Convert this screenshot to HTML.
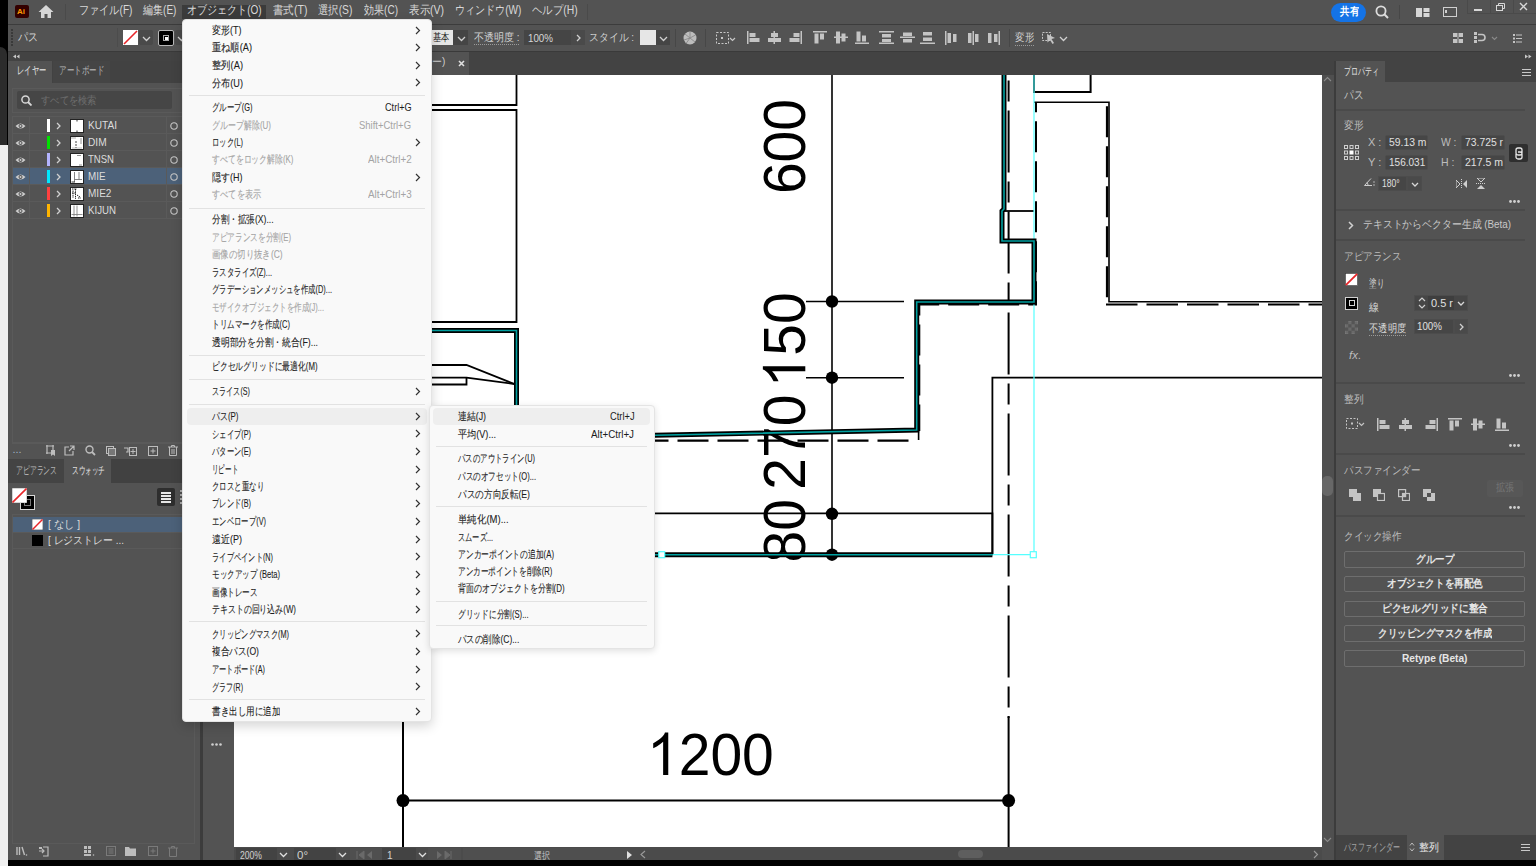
<!DOCTYPE html>
<html><head><meta charset="utf-8"><style>
*{margin:0;padding:0;box-sizing:border-box}
html,body{width:1536px;height:866px;overflow:hidden;background:#000;font-family:"Liberation Sans",sans-serif;}
.a{position:absolute}
.t{position:absolute;white-space:nowrap;line-height:1;transform-origin:0 50%}
</style></head><body>
<div class="a" style="left:0;top:0;width:8px;height:866px;background:#000"></div>
<div class="a" style="left:0;top:47px;width:7px;height:98px;background:#2c2c2c;border-radius:0 7px 0 0"></div>
<div class="a" style="left:0;top:144.5px;width:7.5px;height:722px;background:#f0f0f0"></div>
<div class="a" style="left:7.5px;top:144.5px;width:0.5px;height:722px;background:#aaa"></div>
<div class="a" style="left:8px;top:0;width:1528px;height:24px;background:#535353"></div>
<div class="a" style="left:8px;top:24px;width:1528px;height:1px;background:#3c3c3c"></div>
<div class="a" style="left:15px;top:5px;width:14px;height:13px;background:#330000;border-radius:2px"></div>
<div class="t" style="left:17px;top:7.5px;font-size:8px;font-weight:bold;color:#ff9a00;line-height:1">Ai</div>
<svg class="a" style="left:38px;top:4px" width="16" height="15" viewBox="0 0 16 15"><path d="M8 1 L0.5 8 H3 V14 H6.5 V10 H9.5 V14 H13 V8 H15.5 Z" fill="#d6d6d6"/></svg>
<div class="a" style="left:65px;top:4px;width:1px;height:16px;background:#4a4a4a"></div>
<div class="a" style="left:182px;top:5px;width:84px;height:14px;background:#3b3b3b"></div>
<div class="t" id="t0" style="left:78.5px;top:4.4px;font-size:12px;color:#d8d8d8;font-weight:normal;transform:scaleX(0.845);--w:53.5">ファイル(F)</div>
<div class="t" id="t1" style="left:142.6px;top:4.4px;font-size:12px;color:#d8d8d8;font-weight:normal;transform:scaleX(0.835);--w:33.4">編集(E)</div>
<div class="t" id="t2" style="left:187.4px;top:4.4px;font-size:12px;color:#d8d8d8;font-weight:normal;transform:scaleX(0.835);--w:74.6">オブジェクト(O)</div>
<div class="t" id="t3" style="left:272.6px;top:4.4px;font-size:12px;color:#d8d8d8;font-weight:normal;transform:scaleX(0.875);--w:34.4">書式(T)</div>
<div class="t" id="t4" style="left:318px;top:4.4px;font-size:12px;color:#d8d8d8;font-weight:normal;transform:scaleX(0.860);--w:34.4">選択(S)</div>
<div class="t" id="t5" style="left:364px;top:4.4px;font-size:12px;color:#d8d8d8;font-weight:normal;transform:scaleX(0.836);--w:34">効果(C)</div>
<div class="t" id="t6" style="left:408.6px;top:4.4px;font-size:12px;color:#d8d8d8;font-weight:normal;transform:scaleX(0.875);--w:35">表示(V)</div>
<div class="t" id="t7" style="left:455px;top:4.4px;font-size:12px;color:#d8d8d8;font-weight:normal;transform:scaleX(0.837);--w:66.4">ウィンドウ(W)</div>
<div class="t" id="t8" style="left:532.3px;top:4.4px;font-size:12px;color:#d8d8d8;font-weight:normal;transform:scaleX(0.868);--w:45.7">ヘルプ(H)</div>
<div class="a" style="left:587px;top:4px;width:1px;height:16px;background:#4a4a4a"></div>
<div class="a" style="left:1331px;top:3px;width:35px;height:19px;background:#1473e6;border-radius:10px"></div>
<div class="t" id="t9" style="left:1339.5px;top:6.4px;font-size:11px;color:#fff;font-weight:bold;transform:scaleX(0.864);--w:19">共有</div>
<svg class="a" style="left:1375px;top:5px" width="14" height="14" viewBox="0 0 14 14"><circle cx="6" cy="6" r="4.6" fill="none" stroke="#dcdcdc" stroke-width="1.8"/><path d="M9.3 9.3 L13 13" stroke="#dcdcdc" stroke-width="2"/></svg>
<div class="a" style="left:1399px;top:5px;width:1px;height:14px;background:#474747"></div>
<svg class="a" style="left:1416px;top:8px" width="14" height="10" viewBox="0 0 14 10"><rect x="0" y="0" width="6" height="9" fill="#d6d6d6"/><rect x="7.5" y="0" width="6" height="4" fill="#d6d6d6"/><rect x="7.5" y="5" width="6" height="4" fill="#d6d6d6"/></svg>
<svg class="a" style="left:1443px;top:7px" width="15" height="11" viewBox="0 0 15 11"><rect x="0.5" y="0.5" width="13" height="9" fill="none" stroke="#d0d0d0"/><rect x="2" y="3" width="2" height="3" fill="#d0d0d0"/></svg>
<div class="a" style="left:1467px;top:0;width:69px;height:14px;border:1px solid #4a4a4a;border-top:0;border-right:0"></div>
<div class="a" style="left:1490px;top:0;width:1px;height:14px;background:#4a4a4a"></div>
<div class="a" style="left:1513px;top:0;width:1px;height:14px;background:#4a4a4a"></div>
<div class="a" style="left:1474px;top:9px;width:8px;height:1.5px;background:#d8d8d8"></div>
<svg class="a" style="left:1496px;top:3px" width="9" height="8" viewBox="0 0 9 8"><rect x="0.5" y="2.5" width="6" height="5" fill="none" stroke="#d8d8d8"/><path d="M2.5 2.5 V0.5 H8.5 V5.5 H6.5" fill="none" stroke="#d8d8d8"/></svg>
<svg class="a" style="left:1519px;top:2px" width="9" height="9" viewBox="0 0 9 9"><path d="M1 1 L8 8 M8 1 L1 8" stroke="#d8d8d8" stroke-width="1.4"/></svg>
<div class="a" style="left:8px;top:25px;width:1528px;height:26px;background:#535353"></div>
<div class="a" style="left:11px;top:29px;width:2px;height:17px;background:repeating-linear-gradient(#3a3a3a 0 2px, transparent 2px 3px)"></div>
<div class="t" id="t10" style="left:18.2px;top:31.4px;font-size:12px;color:#d4d4d4;font-weight:normal;transform:scaleX(0.833);--w:20">パス</div>
<svg class="a" style="left:123px;top:30px" width="15" height="15" viewBox="0 0 15 15"><rect x="0" y="0" width="15" height="15" fill="#fff"/><path d="M1 14 L14 1" stroke="#e8262a" stroke-width="1.6"/></svg>
<svg class="a" style="left:142px;top:36px" width="9" height="6" viewBox="0 0 9 6"><path d="M1 1 L4.5 4.5 L8 1" fill="none" stroke="#d0d0d0" stroke-width="1.3"/></svg>
<div class="a" style="left:117px;top:28px;width:1px;height:19px;background:#4c4c4c"></div>
<div class="a" style="left:139px;top:29.5px;width:14px;height:15.5px;background:#4a4a4a;border-radius:2px"></div>
<div class="a" style="left:175px;top:29.5px;width:10px;height:15.5px;background:#4a4a4a;border-radius:2px"></div>
<div class="a" style="left:158px;top:30px;width:16px;height:15.5px;background:#000;border:1px solid #b8b8b8;border-radius:2px"></div>
<div class="a" style="left:163px;top:35px;width:6px;height:6px;border:1px solid #aaa"></div>
<div class="a" style="left:164.5px;top:36.5px;width:3px;height:3px;background:#fff"></div>
<svg class="a" style="left:142px;top:36px" width="9" height="6" viewBox="0 0 9 6"><path d="M1 1 L4.5 4.5 L8 1" fill="none" stroke="#d0d0d0" stroke-width="1.3"/></svg>
<svg class="a" style="left:177px;top:36px" width="9" height="6" viewBox="0 0 9 6"><path d="M1 1 L4.5 4.5 L8 1" fill="none" stroke="#d0d0d0" stroke-width="1.3"/></svg>
<div class="a" style="left:432px;top:30px;width:21px;height:15px;background:#e6e6e6"></div>
<div class="t" id="t11" style="left:433.4px;top:31.9px;font-size:11px;color:#222;font-weight:normal;transform:scaleX(0.745);--w:16.4">基本</div>
<div class="a" style="left:453px;top:30px;width:15px;height:15px;background:#454545"></div>
<svg class="a" style="left:457px;top:36px" width="9" height="6" viewBox="0 0 9 6"><path d="M1 1 L4.5 4.5 L8 1" fill="none" stroke="#d0d0d0" stroke-width="1.3"/></svg>
<div class="t" id="t12" style="left:473.7px;top:31.9px;font-size:11px;color:#d0d0d0;font-weight:normal;transform:scaleX(0.910);--w:45.6">不透明度 :</div>
<div class="a" style="left:474px;top:44px;width:45px;height:1px;border-bottom:1px dotted #9a9a9a"></div>
<div class="a" style="left:524px;top:30px;width:47px;height:15px;background:#454545"></div>
<div class="t" id="t13" style="left:527.6px;top:32.5px;font-size:11px;color:#d8d8d8;font-weight:normal;transform:scaleX(0.888);--w:25">100%</div>
<div class="a" style="left:571px;top:30px;width:14px;height:15px;background:#4a4a4a"></div>
<svg class="a" style="left:576px;top:34px" width="6" height="8" viewBox="0 0 6 8"><path d="M1 1 L4 4 L1 7" fill="none" stroke="#d0d0d0" stroke-width="1.3"/></svg>
<div class="t" id="t14" style="left:589px;top:31.9px;font-size:11px;color:#d0d0d0;font-weight:normal;transform:scaleX(0.898);--w:45">スタイル :</div>
<div class="a" style="left:640px;top:30px;width:16px;height:15px;background:#e6e6e6"></div>
<div class="a" style="left:656px;top:30px;width:14px;height:15px;background:#454545"></div>
<svg class="a" style="left:659px;top:36px" width="9" height="6" viewBox="0 0 9 6"><path d="M1 1 L4.5 4.5 L8 1" fill="none" stroke="#d0d0d0" stroke-width="1.3"/></svg>
<div class="a" style="left:675px;top:29px;width:1px;height:18px;background:#474747"></div>
<svg class="a" style="left:683px;top:31px" width="14" height="14" viewBox="0 0 14 14"><circle cx="7" cy="7" r="6.5" fill="#bdbdbd"/><path d="M7 7 L7 0.5 M7 7 L12.5 4 M7 7 L12 11 M7 7 L3 12.5 M7 7 L1 9 M7 7 L2 3" stroke="#8a8a8a" stroke-width="0.9"/></svg>
<div class="a" style="left:705px;top:29px;width:1px;height:18px;background:#474747"></div>
<svg class="a" style="left:716px;top:32px" width="20" height="13" viewBox="0 0 20 13"><rect x="0.5" y="0.5" width="12" height="11" fill="none" stroke="#c8c8c8" stroke-dasharray="2 1.5"/><rect x="5" y="5" width="2" height="2" fill="#c8c8c8"/><path d="M14 6 L16.5 8.5 L19 6" fill="none" stroke="#c8c8c8" stroke-width="1.2"/></svg>
<svg class="a" style="left:747px;top:31px" width="13" height="13" viewBox="0 0 13 13"><rect x="0" y="0" width="1.5" height="13" fill="#c4c4c4"/><rect x="2.5" y="2" width="6" height="4" fill="#c4c4c4"/><rect x="2.5" y="7" width="10" height="4" fill="#c4c4c4"/></svg>
<svg class="a" style="left:768px;top:31px" width="13" height="13" viewBox="0 0 13 13"><rect x="5.5" y="0" width="1.5" height="13" fill="#c4c4c4"/><rect x="3" y="2" width="7" height="4" fill="#c4c4c4"/><rect x="0" y="7" width="13" height="4" fill="#c4c4c4"/></svg>
<svg class="a" style="left:789px;top:31px" width="13" height="13" viewBox="0 0 13 13"><rect x="11.5" y="0" width="1.5" height="13" fill="#c4c4c4"/><rect x="4.5" y="2" width="6" height="4" fill="#c4c4c4"/><rect x="0.5" y="7" width="10" height="4" fill="#c4c4c4"/></svg>
<svg class="a" style="left:813px;top:31px" width="14" height="13" viewBox="0 0 14 13"><rect x="0" y="0" width="14" height="1.5" fill="#c4c4c4"/><rect x="1.5" y="2.5" width="4" height="10" fill="#c4c4c4"/><rect x="7" y="2.5" width="4" height="6" fill="#c4c4c4"/></svg>
<svg class="a" style="left:834px;top:31px" width="14" height="13" viewBox="0 0 14 13"><rect x="0" y="5.5" width="14" height="1.5" fill="#c4c4c4"/><rect x="2" y="0.5" width="4" height="12" fill="#c4c4c4"/><rect x="7.5" y="2.5" width="4" height="8" fill="#c4c4c4"/></svg>
<svg class="a" style="left:855px;top:31px" width="14" height="13" viewBox="0 0 14 13"><rect x="0" y="11.5" width="14" height="1.5" fill="#c4c4c4"/><rect x="1.5" y="0.5" width="4" height="10" fill="#c4c4c4"/><rect x="7" y="4.5" width="4" height="6" fill="#c4c4c4"/></svg>
<svg class="a" style="left:879px;top:31px" width="15" height="13" viewBox="0 0 15 13"><rect x="0" y="0" width="15" height="1.5" fill="#c4c4c4"/><rect x="3" y="3" width="9" height="3.5" fill="#c4c4c4"/><rect x="0" y="11.5" width="15" height="1.5" fill="#c4c4c4"/><rect x="3" y="8" width="9" height="3" fill="#c4c4c4"/></svg>
<svg class="a" style="left:900px;top:31px" width="15" height="13" viewBox="0 0 15 13"><rect x="0" y="5.5" width="15" height="1.5" fill="#c4c4c4"/><rect x="3" y="1.5" width="9" height="3.5" fill="#c4c4c4"/><rect x="3" y="8" width="9" height="3.5" fill="#c4c4c4"/></svg>
<svg class="a" style="left:920px;top:31px" width="15" height="13" viewBox="0 0 15 13"><rect x="0" y="11.5" width="15" height="1.5" fill="#c4c4c4"/><rect x="3" y="1" width="9" height="3.5" fill="#c4c4c4"/><rect x="3" y="6.5" width="9" height="3.5" fill="#c4c4c4"/></svg>
<svg class="a" style="left:945px;top:31px" width="14" height="14" viewBox="0 0 14 14"><rect x="0" y="0" width="1.5" height="14" fill="#c4c4c4"/><rect x="2.5" y="2" width="3.5" height="10" fill="#c4c4c4"/><rect x="8" y="3" width="3.5" height="8" fill="#c4c4c4"/></svg>
<svg class="a" style="left:967px;top:31px" width="14" height="14" viewBox="0 0 14 14"><rect x="5.5" y="0" width="1.5" height="14" fill="#c4c4c4"/><rect x="1" y="2" width="3.5" height="10" fill="#c4c4c4"/><rect x="8" y="3" width="3.5" height="8" fill="#c4c4c4"/></svg>
<svg class="a" style="left:987px;top:31px" width="14" height="14" viewBox="0 0 14 14"><rect x="11.5" y="0" width="1.5" height="14" fill="#c4c4c4"/><rect x="1" y="2" width="3.5" height="10" fill="#c4c4c4"/><rect x="7" y="3" width="3.5" height="8" fill="#c4c4c4"/></svg>
<div class="a" style="left:1009px;top:29px;width:1px;height:18px;background:#474747"></div>
<div class="t" id="t15" style="left:1015px;top:31.9px;font-size:11px;color:#d0d0d0;font-weight:normal;transform:scaleX(0.864);--w:19">変形</div>
<div class="a" style="left:1015px;top:45px;width:19px;height:1px;border-bottom:1px dotted #9a9a9a"></div>
<svg class="a" style="left:1042px;top:30px" width="14" height="15" viewBox="0 0 14 15"><rect x="0.5" y="2.5" width="8" height="8" fill="none" stroke="#c4c4c4" stroke-dasharray="2 1.2"/><path d="M5 4 L13 8 L9.5 9 L12 13 L10.5 14 L8 10 L5.5 12.5 Z" fill="#c4c4c4"/></svg>
<svg class="a" style="left:1059px;top:36px" width="9" height="6" viewBox="0 0 9 6"><path d="M1 1 L4.5 4.5 L8 1" fill="none" stroke="#d0d0d0" stroke-width="1.3"/></svg>
<svg class="a" style="left:1453px;top:33px" width="10" height="10" viewBox="0 0 10 10"><rect x="0" y="0" width="4" height="4" fill="#c4c4c4"/><rect x="6" y="0" width="4" height="4" fill="#c4c4c4"/><rect x="0" y="6" width="4" height="4" fill="#c4c4c4"/><rect x="6" y="6" width="4" height="4" fill="#c4c4c4"/><rect x="4.5" y="0" width="1" height="10" fill="#c4c4c4"/></svg>
<svg class="a" style="left:1474px;top:32px" width="12" height="12" viewBox="0 0 12 12"><rect x="0" y="0" width="3" height="3" fill="#c4c4c4"/><rect x="0" y="4" width="3" height="3" fill="#c4c4c4"/><rect x="0" y="8" width="3" height="3" fill="#c4c4c4"/><path d="M4 2.5 H8 A3 3 0 0 1 8 8.5 H4" fill="none" stroke="#c4c4c4" stroke-width="1.6"/></svg>
<svg class="a" style="left:1491px;top:36px" width="7" height="5" viewBox="0 0 7 5"><path d="M1 1 L3.5 3.5 L6 1" fill="none" stroke="#8a8a8a" stroke-width="1.1"/></svg>
<svg class="a" style="left:1513px;top:34px" width="9" height="9" viewBox="0 0 9 9"><rect x="0" y="0" width="2" height="2" fill="#c4c4c4"/><rect x="3" y="0.5" width="6" height="1" fill="#c4c4c4"/><rect x="0" y="3.5" width="2" height="2" fill="#c4c4c4"/><rect x="3" y="4" width="6" height="1" fill="#c4c4c4"/><rect x="0" y="7" width="2" height="2" fill="#c4c4c4"/><rect x="3" y="7.5" width="6" height="1" fill="#c4c4c4"/></svg>
<div class="a" style="left:8px;top:51px;width:1528px;height:10px;background:#434343;border-top:1px solid #3a3a3a"></div>
<svg class="a" style="left:13px;top:54px" width="7" height="5" viewBox="0 0 7 5"><path d="M3 0.5 L0 2.5 L3 4.5 Z M6.5 0.5 L3.5 2.5 L6.5 4.5 Z" fill="#c8c8c8"/></svg>
<svg class="a" style="left:1524.5px;top:54px" width="7" height="5" viewBox="0 0 7 5"><path d="M0 0.5 L3 2.5 L0 4.5 Z M3.5 0.5 L6.5 2.5 L3.5 4.5 Z" fill="#c8c8c8"/></svg>
<div class="a" style="left:8px;top:61px;width:192px;height:799px;background:#535353"></div>
<div class="a" style="left:8px;top:61px;width:192px;height:22px;background:#424242"></div>
<div class="a" style="left:8px;top:61px;width:44px;height:22px;background:#535353"></div>
<div class="a" style="left:53px;top:61px;width:57px;height:22px;background:#454545"></div>
<div class="t" id="t16" style="left:16.6px;top:65.0px;font-size:11px;color:#e6e6e6;font-weight:normal;transform:scaleX(0.659);--w:29">レイヤー</div>
<div class="t" id="t17" style="left:59px;top:65.0px;font-size:11px;color:#b8b8b8;font-weight:normal;transform:scaleX(0.682);--w:45">アートボード</div>
<div class="a" style="left:12px;top:88px;width:172px;height:25px;border:1px solid #5a5a5a"></div>
<div class="a" style="left:17px;top:91px;width:155px;height:18px;background:#464646;border-radius:2px"></div>
<svg class="a" style="left:21px;top:95px" width="11" height="11" viewBox="0 0 11 11"><circle cx="4.5" cy="4.5" r="3.6" fill="none" stroke="#d8d8d8" stroke-width="1.5"/><path d="M7 7 L10.5 10.5" stroke="#d8d8d8" stroke-width="1.8"/></svg>
<div class="t" id="t18" style="left:41.2px;top:95.0px;font-size:11px;color:#6e6e6e;font-weight:normal;transform:scaleX(0.841);--w:55.5">すべてを検索</div>
<div class="a" style="left:12px;top:116px;width:188px;height:327px;border:1px solid #5a5a5a;border-right:0"></div>
<div class="a" style="left:13px;top:133px;width:187px;height:1px;background:#5a5a5a"></div>
<div class="a" style="left:29px;top:117px;width:1px;height:17px;background:#5a5a5a"></div>
<div class="a" style="left:166px;top:117px;width:1px;height:17px;background:#5a5a5a"></div>
<svg class="a" style="left:15px;top:122px" width="11" height="8" viewBox="0 0 11 8"><path d="M0.5 4 Q5.5 -1 10.5 4 Q5.5 9 0.5 4 Z" fill="#cfcfcf"/><circle cx="5.5" cy="4" r="2" fill="#535353"/><circle cx="5.5" cy="4" r="1" fill="#cfcfcf"/></svg>
<div class="a" style="left:47px;top:119px;width:2.5px;height:13px;background:#ffffff"></div>
<svg class="a" style="left:56px;top:121.5px" width="6" height="8" viewBox="0 0 6 8"><path d="M1 1 L4 4 L1 7" fill="none" stroke="#d0d0d0" stroke-width="1.3"/></svg>
<div class="a" style="left:70px;top:118.5px;width:14px;height:14px;background:#fff;border:1px solid #222"></div>
<div class="t" id="t19" style="left:88.4px;top:120.0px;font-size:11px;color:#dcdcdc;font-weight:normal;transform:scaleX(0.918);--w:29">KUTAI</div>
<svg class="a" style="left:170px;top:121.5px" width="8" height="8" viewBox="0 0 8 8"><circle cx="4" cy="4" r="3.2" fill="none" stroke="#c8c8c8" stroke-width="1.1"/></svg>
<div class="a" style="left:13px;top:150px;width:187px;height:1px;background:#5a5a5a"></div>
<div class="a" style="left:29px;top:134px;width:1px;height:17px;background:#5a5a5a"></div>
<div class="a" style="left:166px;top:134px;width:1px;height:17px;background:#5a5a5a"></div>
<svg class="a" style="left:15px;top:139px" width="11" height="8" viewBox="0 0 11 8"><path d="M0.5 4 Q5.5 -1 10.5 4 Q5.5 9 0.5 4 Z" fill="#cfcfcf"/><circle cx="5.5" cy="4" r="2" fill="#535353"/><circle cx="5.5" cy="4" r="1" fill="#cfcfcf"/></svg>
<div class="a" style="left:47px;top:136px;width:2.5px;height:13px;background:#00e000"></div>
<svg class="a" style="left:56px;top:138.5px" width="6" height="8" viewBox="0 0 6 8"><path d="M1 1 L4 4 L1 7" fill="none" stroke="#d0d0d0" stroke-width="1.3"/></svg>
<div class="a" style="left:70px;top:135.5px;width:14px;height:14px;background:#fff;border:1px solid #222"></div>
<div class="t" id="t20" style="left:88.4px;top:136.9px;font-size:11px;color:#dcdcdc;font-weight:normal;transform:scaleX(0.922);--w:18.6">DIM</div>
<svg class="a" style="left:170px;top:138.5px" width="8" height="8" viewBox="0 0 8 8"><circle cx="4" cy="4" r="3.2" fill="none" stroke="#c8c8c8" stroke-width="1.1"/></svg>
<div class="a" style="left:13px;top:167px;width:187px;height:1px;background:#5a5a5a"></div>
<div class="a" style="left:29px;top:151px;width:1px;height:17px;background:#5a5a5a"></div>
<div class="a" style="left:166px;top:151px;width:1px;height:17px;background:#5a5a5a"></div>
<svg class="a" style="left:15px;top:156px" width="11" height="8" viewBox="0 0 11 8"><path d="M0.5 4 Q5.5 -1 10.5 4 Q5.5 9 0.5 4 Z" fill="#cfcfcf"/><circle cx="5.5" cy="4" r="2" fill="#535353"/><circle cx="5.5" cy="4" r="1" fill="#cfcfcf"/></svg>
<div class="a" style="left:47px;top:153px;width:2.5px;height:13px;background:#b4b4ff"></div>
<svg class="a" style="left:56px;top:155.5px" width="6" height="8" viewBox="0 0 6 8"><path d="M1 1 L4 4 L1 7" fill="none" stroke="#d0d0d0" stroke-width="1.3"/></svg>
<div class="a" style="left:70px;top:152.5px;width:14px;height:14px;background:#fff;border:1px solid #222"></div>
<div class="t" id="t21" style="left:88.4px;top:153.9px;font-size:11px;color:#dcdcdc;font-weight:normal;transform:scaleX(0.868);--w:26">TNSN</div>
<svg class="a" style="left:170px;top:155.5px" width="8" height="8" viewBox="0 0 8 8"><circle cx="4" cy="4" r="3.2" fill="none" stroke="#c8c8c8" stroke-width="1.1"/></svg>
<div class="a" style="left:13px;top:168px;width:187px;height:17px;background:#4c6179"></div>
<div class="a" style="left:13px;top:184px;width:187px;height:1px;background:#5a5a5a"></div>
<div class="a" style="left:29px;top:168px;width:1px;height:17px;background:#5a5a5a"></div>
<div class="a" style="left:166px;top:168px;width:1px;height:17px;background:#5a5a5a"></div>
<svg class="a" style="left:15px;top:173px" width="11" height="8" viewBox="0 0 11 8"><path d="M0.5 4 Q5.5 -1 10.5 4 Q5.5 9 0.5 4 Z" fill="#cfcfcf"/><circle cx="5.5" cy="4" r="2" fill="#535353"/><circle cx="5.5" cy="4" r="1" fill="#cfcfcf"/></svg>
<div class="a" style="left:47px;top:170px;width:2.5px;height:13px;background:#00e8ff"></div>
<svg class="a" style="left:56px;top:172.5px" width="6" height="8" viewBox="0 0 6 8"><path d="M1 1 L4 4 L1 7" fill="none" stroke="#d0d0d0" stroke-width="1.3"/></svg>
<div class="a" style="left:70px;top:169.5px;width:14px;height:14px;background:#fff;border:1px solid #222"></div>
<div class="t" id="t22" style="left:88.4px;top:170.9px;font-size:11px;color:#dcdcdc;font-weight:normal;transform:scaleX(0.895);--w:17.5">MIE</div>
<svg class="a" style="left:170px;top:172.5px" width="8" height="8" viewBox="0 0 8 8"><circle cx="4" cy="4" r="3.2" fill="none" stroke="#c8c8c8" stroke-width="1.1"/></svg>
<div class="a" style="left:13px;top:201px;width:187px;height:1px;background:#5a5a5a"></div>
<div class="a" style="left:29px;top:185px;width:1px;height:17px;background:#5a5a5a"></div>
<div class="a" style="left:166px;top:185px;width:1px;height:17px;background:#5a5a5a"></div>
<svg class="a" style="left:15px;top:190px" width="11" height="8" viewBox="0 0 11 8"><path d="M0.5 4 Q5.5 -1 10.5 4 Q5.5 9 0.5 4 Z" fill="#cfcfcf"/><circle cx="5.5" cy="4" r="2" fill="#535353"/><circle cx="5.5" cy="4" r="1" fill="#cfcfcf"/></svg>
<div class="a" style="left:47px;top:187px;width:2.5px;height:13px;background:#ff4040"></div>
<svg class="a" style="left:56px;top:189.5px" width="6" height="8" viewBox="0 0 6 8"><path d="M1 1 L4 4 L1 7" fill="none" stroke="#d0d0d0" stroke-width="1.3"/></svg>
<div class="a" style="left:70px;top:186.5px;width:14px;height:14px;background:#fff;border:1px solid #222"></div>
<div class="t" id="t23" style="left:88.4px;top:187.9px;font-size:11px;color:#dcdcdc;font-weight:normal;transform:scaleX(0.911);--w:23.4">MIE2</div>
<svg class="a" style="left:170px;top:189.5px" width="8" height="8" viewBox="0 0 8 8"><circle cx="4" cy="4" r="3.2" fill="none" stroke="#c8c8c8" stroke-width="1.1"/></svg>
<div class="a" style="left:13px;top:218px;width:187px;height:1px;background:#5a5a5a"></div>
<div class="a" style="left:29px;top:202px;width:1px;height:17px;background:#5a5a5a"></div>
<div class="a" style="left:166px;top:202px;width:1px;height:17px;background:#5a5a5a"></div>
<svg class="a" style="left:15px;top:207px" width="11" height="8" viewBox="0 0 11 8"><path d="M0.5 4 Q5.5 -1 10.5 4 Q5.5 9 0.5 4 Z" fill="#cfcfcf"/><circle cx="5.5" cy="4" r="2" fill="#535353"/><circle cx="5.5" cy="4" r="1" fill="#cfcfcf"/></svg>
<div class="a" style="left:47px;top:204px;width:2.5px;height:13px;background:#ffb400"></div>
<svg class="a" style="left:56px;top:206.5px" width="6" height="8" viewBox="0 0 6 8"><path d="M1 1 L4 4 L1 7" fill="none" stroke="#d0d0d0" stroke-width="1.3"/></svg>
<div class="a" style="left:70px;top:203.5px;width:14px;height:14px;background:#fff;border:1px solid #222"></div>
<div class="t" id="t24" style="left:88.4px;top:204.9px;font-size:11px;color:#dcdcdc;font-weight:normal;transform:scaleX(0.881);--w:28">KIJUN</div>
<svg class="a" style="left:170px;top:206.5px" width="8" height="8" viewBox="0 0 8 8"><circle cx="4" cy="4" r="3.2" fill="none" stroke="#c8c8c8" stroke-width="1.1"/></svg>
<svg class="a" style="left:71px;top:119.5px" width="12" height="12" viewBox="0 0 12 12"><path d="M6 0 V1.5 M6 10.5 V12" stroke="#333" stroke-width="1"/></svg>
<svg class="a" style="left:71px;top:136.5px" width="12" height="12" viewBox="0 0 12 12"><path d="M0.5 1 H5" stroke="#555" stroke-width="1" stroke-dasharray="1 1"/><path d="M5 4 V11" stroke="#444" stroke-width="1" stroke-dasharray="2 1"/><path d="M10 1 V7" stroke="#777" stroke-width="0.8"/><path d="M1 11 H11" stroke="#999" stroke-width="0.6"/></svg>
<svg class="a" style="left:71px;top:153.5px" width="12" height="12" viewBox="0 0 12 12"><path d="M6 1.5 H10" stroke="#777" stroke-width="0.8"/><path d="M8 11 H11" stroke="#777" stroke-width="0.8"/></svg>
<svg class="a" style="left:71px;top:170.5px" width="12" height="12" viewBox="0 0 12 12"><path d="M3.5 1 V11 M3.5 8.5 H11 M8 1 V8.5" stroke="#666" stroke-width="0.8"/><path d="M0.5 11 H4" stroke="#333" stroke-width="1"/></svg>
<svg class="a" style="left:71px;top:187.5px" width="12" height="12" viewBox="0 0 12 12"><path d="M1 1 H6 M2 2.5 V10 M4.5 1 V11 M1 5 H5 M6 7 L9 9 M7 10 H10" stroke="#222" stroke-width="1" stroke-dasharray="1.5 0.8"/></svg>
<svg class="a" style="left:71px;top:204.5px" width="12" height="12" viewBox="0 0 12 12"><path d="M3 0.5 V11.5 M6 0.5 V11.5 M0.5 9.5 H11.5" stroke="#777" stroke-width="0.8"/></svg>
<div class="a" style="left:12px;top:443px;width:188px;height:1px;background:#5a5a5a"></div>
<div class="t" id="t25" style="left:12.5px;top:443.9px;font-size:11px;color:#9fb0c8;font-weight:normal;">...</div>
<svg class="a" style="left:45px;top:445px" width="11" height="12" viewBox="0 0 11 12"><path d="M1 1 H9 M2 0 V9 M1 8 H9 M8 0 V9" stroke="#bdbdbd" stroke-width="1.2" fill="none"/><path d="M6 5 H10 V11 L8 9.5 L6 11 Z" fill="#bdbdbd"/></svg>
<svg class="a" style="left:64px;top:445px" width="11" height="11" viewBox="0 0 11 11"><path d="M5 2 H1 V10 H9 V6 M6 1 H10 V5 M10 1 L5 6" stroke="#bdbdbd" stroke-width="1.2" fill="none"/></svg>
<svg class="a" style="left:85px;top:445px" width="11" height="11" viewBox="0 0 11 11"><circle cx="4.5" cy="4.5" r="3.5" fill="none" stroke="#bdbdbd" stroke-width="1.4"/><path d="M7 7 L10 10" stroke="#bdbdbd" stroke-width="1.8"/></svg>
<svg class="a" style="left:106px;top:446px" width="10" height="10" viewBox="0 0 10 10"><rect x="0.5" y="0.5" width="7" height="7" fill="none" stroke="#bdbdbd"/><rect x="2.5" y="2.5" width="7" height="7" fill="#777" stroke="#bdbdbd"/></svg>
<svg class="a" style="left:124px;top:446px" width="13" height="11" viewBox="0 0 13 11"><path d="M0 2 H4 V6 H2" fill="none" stroke="#bdbdbd" stroke-width="1.2"/><rect x="5.5" y="1.5" width="7" height="8" fill="none" stroke="#bdbdbd"/><path d="M9 3 V8 M6.5 5.5 H11.5" stroke="#bdbdbd"/></svg>
<svg class="a" style="left:148px;top:446px" width="10" height="10" viewBox="0 0 10 10"><rect x="0.5" y="0.5" width="9" height="9" fill="none" stroke="#bdbdbd"/><path d="M5 2.5 V7.5 M2.5 5 H7.5" stroke="#bdbdbd"/></svg>
<svg class="a" style="left:168px;top:445px" width="10" height="11" viewBox="0 0 10 11"><path d="M0 2 H10 M3.5 2 V0.5 H6.5 V2 M1.5 2 V10.5 H8.5 V2 M4 4 V9 M6 4 V9" stroke="#bdbdbd" fill="none"/></svg>
<div class="a" style="left:8px;top:459px;width:192px;height:24px;background:#414141"></div>
<div class="a" style="left:8px;top:459px;width:56px;height:24px;background:#444444"></div>
<div class="a" style="left:64px;top:459px;width:47px;height:24px;background:#535353"></div>
<div class="t" id="t26" style="left:16px;top:464.9px;font-size:11px;color:#b8b8b8;font-weight:normal;transform:scaleX(0.621);--w:41">アピアランス</div>
<div class="t" id="t27" style="left:72px;top:464.9px;font-size:11px;color:#e6e6e6;font-weight:normal;transform:scaleX(0.600);--w:33">スウォッチ</div>
<div class="a" style="left:20px;top:495px;width:15px;height:15px;background:#000;border:1.5px solid #d6d6d6"></div>
<div class="a" style="left:24px;top:499px;width:7px;height:7px;border:1.5px solid #777"></div>
<svg class="a" style="left:12px;top:488px" width="15" height="15" viewBox="0 0 15 15"><rect x="0" y="0" width="15" height="15" fill="#fff" stroke="#555" stroke-width="0.5"/><path d="M0.5 14.5 L14.5 0.5" stroke="#e8262a" stroke-width="1.6"/></svg>
<div class="a" style="left:157px;top:488px;width:18px;height:18px;background:#2e2e2e;border-radius:2px"></div>
<div class="a" style="left:161px;top:491.5px;width:10px;height:2px;background:#e6e6e6"></div>
<div class="a" style="left:161px;top:494.7px;width:10px;height:2px;background:#e6e6e6"></div>
<div class="a" style="left:161px;top:497.9px;width:10px;height:2px;background:#e6e6e6"></div>
<div class="a" style="left:161px;top:501.1px;width:10px;height:2px;background:#e6e6e6"></div>
<div class="a" style="left:180px;top:490px;width:2px;height:14px;background:repeating-linear-gradient(#aaa 0 2px,transparent 2px 4px)"></div>
<div class="a" style="left:12px;top:514px;width:183px;height:330px;border:1px solid #5a5a5a"></div>
<div class="a" style="left:13px;top:517px;width:187px;height:15px;background:#4c6179"></div>
<div class="a" style="left:13px;top:532px;width:187px;height:1px;background:#5a5a5a"></div>
<div class="a" style="left:13px;top:548px;width:187px;height:1px;background:#5a5a5a"></div>
<svg class="a" style="left:32px;top:519px" width="11" height="11" viewBox="0 0 11 11"><rect x="0" y="0" width="11" height="11" fill="#fff" stroke="#333" stroke-width="0.6"/><path d="M0.5 10.5 L10.5 0.5" stroke="#e8262a" stroke-width="1.5"/></svg>
<div class="t" id="t28" style="left:47.8px;top:519.0px;font-size:11px;color:#dcdcdc;font-weight:normal;transform:scaleX(0.935);--w:32">[ なし ]</div>
<div class="a" style="left:32px;top:535px;width:11px;height:11px;background:#000"></div>
<div class="t" id="t29" style="left:47.8px;top:535.0px;font-size:11px;color:#dcdcdc;font-weight:normal;transform:scaleX(0.901);--w:76">[ レジストレー ...</div>
<svg class="a" style="left:16px;top:846px" width="12" height="11" viewBox="0 0 12 11"><path d="M1 1 V9 M3.5 1 V9 M6 1 L8.5 9" stroke="#bdbdbd" stroke-width="1.4" fill="none"/><circle cx="10.5" cy="9" r="0.8" fill="#bdbdbd"/></svg>
<svg class="a" style="left:38px;top:846px" width="11" height="11" viewBox="0 0 11 11"><path d="M5 1 H10 V10 H5 M1 5 H6 M4 3 L6 5 L4 7" stroke="#bdbdbd" stroke-width="1.2" fill="none"/><rect x="1" y="1" width="3" height="2" fill="#bdbdbd"/></svg>
<svg class="a" style="left:84px;top:846px" width="11" height="11" viewBox="0 0 11 11"><rect x="0" y="0" width="3" height="3" fill="#bdbdbd"/><rect x="4" y="0" width="3" height="3" fill="#bdbdbd"/><rect x="0" y="4" width="3" height="3" fill="#bdbdbd"/><rect x="4" y="4" width="3" height="3" fill="#bdbdbd"/><rect x="0" y="8" width="7" height="2" fill="#bdbdbd"/><circle cx="9.5" cy="9" r="0.8" fill="#bdbdbd"/></svg>
<svg class="a" style="left:106px;top:846px" width="10" height="10" viewBox="0 0 10 10"><rect x="0.5" y="0.5" width="9" height="9" fill="none" stroke="#7a7a7a"/><path d="M2.5 5 H7.5 M2.5 3 H7.5 M2.5 7 H7.5" stroke="#7a7a7a"/></svg>
<svg class="a" style="left:125px;top:846px" width="11" height="10" viewBox="0 0 11 10"><path d="M0 1 H4 L5 2.5 H11 V10 H0 Z" fill="#bdbdbd"/></svg>
<svg class="a" style="left:148px;top:846px" width="10" height="10" viewBox="0 0 10 10"><rect x="0.5" y="0.5" width="9" height="9" fill="none" stroke="#7a7a7a"/><path d="M5 2.5 V7.5 M2.5 5 H7.5" stroke="#7a7a7a"/></svg>
<svg class="a" style="left:168px;top:846px" width="10" height="11" viewBox="0 0 10 11"><path d="M0 2 H10 M3.5 2 V0.5 H6.5 V2 M1.5 2 V10.5 H8.5 V2" stroke="#7a7a7a" fill="none"/></svg>
<div class="a" style="left:8px;top:860px;width:230px;height:6px;background:#000"></div>
<div class="a" style="left:200px;top:61px;width:2.5px;height:799px;background:#3c3c3c"></div>
<div class="a" style="left:202.5px;top:61px;width:31.5px;height:799px;background:#535353"></div>
<svg class="a" style="left:211px;top:742.5px" width="11" height="3" viewBox="0 0 11 3"><circle cx="1.5" cy="1.5" r="1.3" fill="#d0d0d0"/><circle cx="5.5" cy="1.5" r="1.3" fill="#d0d0d0"/><circle cx="9.5" cy="1.5" r="1.3" fill="#d0d0d0"/></svg>
<div class="a" style="left:234px;top:61px;width:1101px;height:14px;background:#434343"></div>
<div class="a" style="left:234px;top:52px;width:235px;height:23px;background:#535353"></div>
<div class="t" id="t30" style="left:432px;top:57.0px;font-size:10px;color:#cfcfcf;font-weight:normal;">ー)</div>
<svg class="a" style="left:458px;top:59.5px" width="7" height="7" viewBox="0 0 7 7"><path d="M1 1 L6 6 M6 1 L1 6" stroke="#e0e0e0" stroke-width="1.6"/></svg>
<svg class="a" style="left:234px;top:75px" width="1088" height="772" viewBox="234 75 1088 772"><rect x="234" y="75" width="1088" height="772" fill="#fff"/><path d="M234 105 H516.5 V70" fill="none" stroke="#000" stroke-width="1.8" stroke-linecap="butt" stroke-linejoin="miter"/><path d="M234 110 H516.5 V322 H234" fill="none" stroke="#000" stroke-width="1.8" stroke-linecap="butt" stroke-linejoin="miter"/><path d="M234 365 H466.5 L514.5 384" fill="none" stroke="#000" stroke-width="1.8" stroke-linecap="butt" stroke-linejoin="miter"/><path d="M234 377.6 H466.5 L514.5 384" fill="none" stroke="#000" stroke-width="1.8" stroke-linecap="butt" stroke-linejoin="miter"/><path d="M234 384.5 H466.5 V377.6" fill="none" stroke="#000" stroke-width="1.8" stroke-linecap="butt" stroke-linejoin="miter"/><path d="M234 440.6 H910.8" fill="none" stroke="#000" stroke-width="2.2" stroke-linecap="butt" stroke-linejoin="miter" stroke-dasharray="31 9" stroke-dashoffset="36.5"/><path d="M918.6 440 V431" fill="none" stroke="#000" stroke-width="1.6" stroke-linecap="butt" stroke-linejoin="miter"/><path d="M919.3 431 V304.5 H1036 V102.3" fill="none" stroke="#000" stroke-width="2.0" stroke-linecap="butt" stroke-linejoin="miter" stroke-dasharray="31 9" stroke-dashoffset="4.6"/><path d="M1034 70 V92 H1090.6 V70" fill="none" stroke="#000" stroke-width="2.0" stroke-linecap="butt" stroke-linejoin="miter"/><path d="M1003 211 H1034" fill="none" stroke="#000" stroke-width="1.8" stroke-linecap="butt" stroke-linejoin="miter"/><path d="M1034 102.3 H1109 V301.8 H1330" fill="none" stroke="#000" stroke-width="1.6" stroke-linecap="butt" stroke-linejoin="miter"/><path d="M1107 102.3 V301.8" fill="none" stroke="#000" stroke-width="2.2" stroke-linecap="butt" stroke-linejoin="miter" stroke-dasharray="31 9" stroke-dashoffset="-4"/><path d="M1106 304.5 H1330" fill="none" stroke="#000" stroke-width="2.2" stroke-linecap="butt" stroke-linejoin="miter" stroke-dasharray="31.5 9" stroke-dashoffset="0"/><path d="M654 513.3 H992.4 V554.7" fill="none" stroke="#000" stroke-width="1.8" stroke-linecap="butt" stroke-linejoin="miter"/><path d="M992.4 554.7 V377.7 H1330" fill="none" stroke="#000" stroke-width="1.8" stroke-linecap="butt" stroke-linejoin="miter"/><path d="M1008.6 75 V718" fill="none" stroke="#000" stroke-width="2.0" stroke-linecap="butt" stroke-linejoin="miter" stroke-dasharray="62 9 21 9" stroke-dashoffset="65.4"/><path d="M1008.6 716 V850" fill="none" stroke="#000" stroke-width="2.0" stroke-linecap="butt" stroke-linejoin="miter"/><path d="M832 70 V554.7" fill="none" stroke="#000" stroke-width="1.6" stroke-linecap="butt" stroke-linejoin="miter"/><path d="M806 301.5 H904" fill="none" stroke="#000" stroke-width="1.6" stroke-linecap="butt" stroke-linejoin="miter"/><path d="M806 377.7 H904" fill="none" stroke="#000" stroke-width="1.6" stroke-linecap="butt" stroke-linejoin="miter"/><circle cx="832" cy="301.5" r="6.2" fill="#000"/><circle cx="832" cy="377.7" r="6.2" fill="#000"/><circle cx="832" cy="513.8" r="6.2" fill="#000"/><circle cx="832" cy="554.7" r="6.2" fill="#000"/><path d="M403 70 V850" fill="none" stroke="#000" stroke-width="2.0" stroke-linecap="butt" stroke-linejoin="miter"/><path d="M403 800.6 H1008.6" fill="none" stroke="#000" stroke-width="2.0" stroke-linecap="butt" stroke-linejoin="miter"/><circle cx="403" cy="800.6" r="6.5" fill="#000"/><circle cx="1008.6" cy="800.6" r="6.5" fill="#000"/><g transform="translate(805.3 194.1) rotate(-90) scale(1 1.04)"><text x="0.00" y="0" font-family="Liberation Sans" font-size="57" fill="#000">6</text><text x="31.69" y="0" font-family="Liberation Sans" font-size="57" fill="#000">0</text><text x="63.38" y="0" font-family="Liberation Sans" font-size="57" fill="#000">0</text></g><g transform="translate(805.3 387.5) rotate(-90) scale(1 1.04)"><path transform="translate(0.00 0) scale(0.0570 -0.0570)" d="M373 0 H283 V560 C255 533 218 507 172 481 C145 466 125 457 109 451 V536 C150 555 195 583 240 618 C283 652 305 685 315 716 H373 Z" fill="#000"/><text x="31.69" y="0" font-family="Liberation Sans" font-size="57" fill="#000">5</text><text x="63.38" y="0" font-family="Liberation Sans" font-size="57" fill="#000">0</text></g><g transform="translate(805.3 489.7) rotate(-90) scale(1 1.04)"><text x="0.00" y="0" font-family="Liberation Sans" font-size="57" fill="#000">2</text><text x="31.69" y="0" font-family="Liberation Sans" font-size="57" fill="#000">7</text><text x="63.38" y="0" font-family="Liberation Sans" font-size="57" fill="#000">0</text></g><g transform="translate(805.3 562.5) rotate(-90) scale(1 1.04)"><text x="0.00" y="0" font-family="Liberation Sans" font-size="57" fill="#000">8</text><text x="31.69" y="0" font-family="Liberation Sans" font-size="57" fill="#000">0</text></g><g transform="translate(647 775) rotate(0) scale(1 1.04)"><path transform="translate(0.00 0) scale(0.0570 -0.0570)" d="M373 0 H283 V560 C255 533 218 507 172 481 C145 466 125 457 109 451 V536 C150 555 195 583 240 618 C283 652 305 685 315 716 H373 Z" fill="#000"/><text x="31.69" y="0" font-family="Liberation Sans" font-size="57" fill="#000">2</text><text x="63.38" y="0" font-family="Liberation Sans" font-size="57" fill="#000">0</text><text x="95.08" y="0" font-family="Liberation Sans" font-size="57" fill="#000">0</text></g><path d="M1034 75 V554.7 H992" fill="none" stroke="#5ff" stroke-width="1.2" stroke-linecap="butt" stroke-linejoin="miter"/><path d="M234 330.5 H516.5 V436.5 L654.8 435.3 L916.7 430 V302 H1034 V241 H1002 V211 L1004 209 V70" fill="none" stroke="#000" stroke-width="5.0" stroke-linecap="butt" stroke-linejoin="miter"/><path d="M234 330.5 H516.5 V436.5 L654.8 435.3 L916.7 430 V302 H1034 V241 H1002 V211 L1004 209 V70" fill="none" stroke="#00a0a0" stroke-width="1.6" stroke-linecap="butt" stroke-linejoin="miter"/><path d="M654 554.7 H992.4" fill="none" stroke="#000" stroke-width="5.0" stroke-linecap="butt" stroke-linejoin="miter"/><path d="M654 554.7 H992.4" fill="none" stroke="#00a0a0" stroke-width="1.6" stroke-linecap="butt" stroke-linejoin="miter"/><rect x="658.7" y="551.7" width="6" height="6" fill="#fff" stroke="#5ff" stroke-width="1.2"/><rect x="1030.3" y="551.7" width="6" height="6" fill="#fff" stroke="#5ff" stroke-width="1.2"/></svg>
<div class="a" style="left:234px;top:847px;width:1101px;height:13px;background:#4b4b4b"></div>
<div class="a" style="left:236px;top:848px;width:41px;height:12px;background:#434343"></div>
<div class="t" id="t31" style="left:240px;top:850.5px;font-size:10px;color:#d0d0d0;font-weight:normal;transform:scaleX(0.860);--w:22">200%</div>
<div class="a" style="left:277px;top:848px;width:13px;height:12px;background:#4b4b4b"></div>
<svg class="a" style="left:279px;top:852px" width="9" height="6" viewBox="0 0 9 6"><path d="M1 1 L4.5 4.5 L8 1" fill="none" stroke="#e0e0e0" stroke-width="1.3"/></svg>
<div class="a" style="left:294px;top:848px;width:42px;height:12px;background:#434343"></div>
<div class="t" id="t32" style="left:297px;top:850.5px;font-size:10px;color:#d0d0d0;font-weight:normal;transform:scaleX(1.150);--w:11">0°</div>
<svg class="a" style="left:338px;top:852px" width="9" height="6" viewBox="0 0 9 6"><path d="M1 1 L4.5 4.5 L8 1" fill="none" stroke="#e0e0e0" stroke-width="1.3"/></svg>
<div class="a" style="left:350px;top:848px;width:32px;height:12px;background:#4f4f4f"></div>
<svg class="a" style="left:356px;top:850px" width="18" height="10" viewBox="0 0 18 10"><path d="M1 1 V9 M8 1 L3 5 L8 9 Z" fill="#6a6a6a" stroke="#6a6a6a"/><path d="M16 1 L11 5 L16 9 Z" fill="#6a6a6a"/></svg>
<div class="a" style="left:382px;top:848px;width:34px;height:12px;background:#434343"></div>
<div class="t" id="t33" style="left:387px;top:850.5px;font-size:10px;color:#d0d0d0;font-weight:normal;">1</div>
<svg class="a" style="left:418px;top:852px" width="9" height="6" viewBox="0 0 9 6"><path d="M1 1 L4.5 4.5 L8 1" fill="none" stroke="#e0e0e0" stroke-width="1.3"/></svg>
<div class="a" style="left:428px;top:848px;width:33px;height:12px;background:#4f4f4f"></div>
<svg class="a" style="left:436px;top:850px" width="17" height="10" viewBox="0 0 17 10"><path d="M1 1 L6 5 L1 9 Z" fill="#6a6a6a"/><path d="M9 1 L14 5 L9 9 Z M15 1 V9" fill="#6a6a6a" stroke="#6a6a6a"/></svg>
<div class="a" style="left:463px;top:848px;width:167px;height:12px;background:#4f4f4f"></div>
<div class="t" id="t34" style="left:534px;top:850.5px;font-size:10px;color:#c8c8c8;font-weight:normal;transform:scaleX(0.800);--w:16">選択</div>
<svg class="a" style="left:626px;top:850px" width="7" height="10" viewBox="0 0 7 10"><path d="M1 1 L6 5 L1 9 Z" fill="#e0e0e0"/></svg>
<svg class="a" style="left:640px;top:850px" width="6" height="9" viewBox="0 0 6 9"><path d="M5 1 L1 4.5 L5 8" fill="none" stroke="#9a9a9a" stroke-width="1.1"/></svg>
<div class="a" style="left:958px;top:850px;width:25px;height:8px;background:#5e5e5e;border-radius:4px"></div>
<svg class="a" style="left:1313px;top:850px" width="6" height="9" viewBox="0 0 6 9"><path d="M1 1 L4.5 4.5 L1 8" fill="none" stroke="#9a9a9a" stroke-width="1.1"/></svg>
<div class="a" style="left:1322px;top:847px;width:13px;height:13px;background:#4f4f4f"></div>
<div class="a" style="left:1322px;top:75px;width:13px;height:772px;background:#4f4f4f"></div>
<svg class="a" style="left:1323px;top:76px" width="9" height="6" viewBox="0 0 9 6"><path d="M1 5 L4.5 1.5 L8 5" fill="none" stroke="#8a8a8a" stroke-width="1.1"/></svg>
<svg class="a" style="left:1323px;top:837px" width="9" height="6" viewBox="0 0 9 6"><path d="M1 1 L4.5 4.5 L8 1" fill="none" stroke="#8a8a8a" stroke-width="1.1"/></svg>
<div class="a" style="left:1322px;top:476px;width:11px;height:20px;background:#676767;border-radius:5px"></div>
<div class="a" style="left:1334px;top:61px;width:2px;height:799px;background:#3c3c3c"></div>
<div class="a" style="left:1336px;top:61px;width:200px;height:799px;background:#535353"></div>
<div class="a" style="left:1336px;top:61px;width:200px;height:21px;background:#434343"></div>
<div class="a" style="left:1336px;top:61px;width:49px;height:21px;background:#535353"></div>
<div class="t" id="t35" style="left:1344px;top:66.0px;font-size:11px;color:#e6e6e6;font-weight:normal;transform:scaleX(0.636);--w:35">プロパティ</div>
<div class="a" style="left:1522px;top:69.0px;width:9px;height:1px;background:#c8c8c8"></div>
<div class="a" style="left:1522px;top:71.8px;width:9px;height:1px;background:#c8c8c8"></div>
<div class="a" style="left:1522px;top:74.6px;width:9px;height:1px;background:#c8c8c8"></div>
<div class="t" id="t36" style="left:1344px;top:89.4px;font-size:12px;color:#c8c8c8;font-weight:normal;transform:scaleX(0.808);--w:19.4">パス</div>
<div class="a" style="left:1336px;top:109px;width:189px;height:2px;background:#4a4a4a"></div>
<div class="t" id="t37" style="left:1344px;top:119.5px;font-size:11px;color:#bdbdbd;font-weight:normal;transform:scaleX(0.882);--w:19.4">変形</div>
<svg class="a" style="left:1344px;top:145px" width="15" height="15" viewBox="0 0 15 15"><g fill="none" stroke="#cfcfcf" stroke-width="1"><rect x="0.5" y="0.5" width="3" height="3"/><rect x="6" y="0.5" width="3" height="3"/><rect x="11.5" y="0.5" width="3" height="3"/><rect x="0.5" y="6" width="3" height="3"/><rect x="11.5" y="6" width="3" height="3"/><rect x="0.5" y="11.5" width="3" height="3"/><rect x="6" y="11.5" width="3" height="3"/><rect x="11.5" y="11.5" width="3" height="3"/></g><rect x="5.5" y="5.5" width="4" height="4" fill="#fff"/></svg>
<div class="t" id="t38" style="left:1367.8px;top:136.9px;font-size:11px;color:#bdbdbd;font-weight:normal;transform:scaleX(0.996);--w:13.4">X :</div>
<div class="t" id="t39" style="left:1441.3px;top:136.9px;font-size:11px;color:#bdbdbd;font-weight:normal;transform:scaleX(0.939);--w:15.5">W :</div>
<div class="t" id="t40" style="left:1367.8px;top:156.9px;font-size:11px;color:#bdbdbd;font-weight:normal;transform:scaleX(1.010);--w:13.4">Y :</div>
<div class="t" id="t41" style="left:1441.3px;top:156.9px;font-size:11px;color:#bdbdbd;font-weight:normal;transform:scaleX(0.953);--w:13.4">H :</div>
<div class="a" style="left:1385px;top:135px;width:43px;height:15px;background:#464646;border:1px solid #4c4c4c;border-radius:2px"></div>
<div class="t" id="t42" style="left:1388.8px;top:136.9px;font-size:11px;color:#e0e0e0;font-weight:normal;transform:scaleX(0.943);--w:37.5">59.13 m</div>
<div class="a" style="left:1461px;top:135px;width:44px;height:15px;background:#464646;border:1px solid #4c4c4c;border-radius:2px"></div>
<div class="t" id="t43" style="left:1464.8px;top:136.9px;font-size:11px;color:#e0e0e0;font-weight:normal;transform:scaleX(0.941);--w:38">73.725 r</div>
<div class="a" style="left:1385px;top:155px;width:43px;height:15px;background:#464646;border:1px solid #4c4c4c;border-radius:2px"></div>
<div class="t" id="t44" style="left:1388.8px;top:156.9px;font-size:11px;color:#e0e0e0;font-weight:normal;transform:scaleX(0.910);--w:36.2">156.031</div>
<div class="a" style="left:1461px;top:155px;width:44px;height:15px;background:#464646;border:1px solid #4c4c4c;border-radius:2px"></div>
<div class="t" id="t45" style="left:1464.8px;top:156.9px;font-size:11px;color:#e0e0e0;font-weight:normal;transform:scaleX(0.956);--w:38">217.5 m</div>
<div class="a" style="left:1509px;top:143.5px;width:19px;height:18.5px;background:#2f2f2f;border-radius:2px"></div>
<svg class="a" style="left:1514.5px;top:146.5px" width="8" height="13" viewBox="0 0 8 13"><path d="M3 1 H5 A2 2 0 0 1 7 3 V6 A2 2 0 0 1 5 8 H3 A2 2 0 0 1 1 6 V3 A2 2 0 0 1 3 1 Z M3 5 H5 A2 2 0 0 1 7 7 V10 A2 2 0 0 1 5 12 H3 A2 2 0 0 1 1 10 V7" fill="none" stroke="#e8e8e8" stroke-width="1.3"/></svg>
<svg class="a" style="left:1364px;top:177px" width="11" height="10" viewBox="0 0 11 10"><path d="M0.5 8.5 L7 1.5 M0.5 8.5 H8 M4 8.5 A4 4 0 0 0 3 5.5" fill="none" stroke="#cfcfcf" stroke-width="1"/><circle cx="10" cy="8" r="0.7" fill="#cfcfcf"/><circle cx="10" cy="5" r="0.7" fill="#cfcfcf"/></svg>
<div class="a" style="left:1377.7px;top:176px;width:29.3px;height:15px;background:#464646;border:1px solid #4c4c4c"></div>
<div class="t" id="t46" style="left:1382px;top:177.9px;font-size:11px;color:#e0e0e0;font-weight:normal;transform:scaleX(0.777);--w:17.7">180°</div>
<div class="a" style="left:1407px;top:176px;width:14.6px;height:15px;background:#4a4a4a;border:1px solid #4c4c4c"></div>
<svg class="a" style="left:1410.5px;top:182px" width="8" height="5" viewBox="0 0 8 5"><path d="M1 1 L4 4 L7 1" fill="none" stroke="#d8d8d8" stroke-width="1.3"/></svg>
<svg class="a" style="left:1456px;top:179px" width="12" height="10" viewBox="0 0 12 10"><path d="M0 1 L4 5 L0 9 Z" fill="none" stroke="#cfcfcf"/><path d="M5.5 0 V10" stroke="#cfcfcf" stroke-dasharray="1 1"/><path d="M11 1 L7 5 L11 9 Z" fill="#cfcfcf"/></svg>
<svg class="a" style="left:1476px;top:178px" width="10" height="12" viewBox="0 0 10 12"><path d="M1 0 L5 4 L9 0 Z" fill="none" stroke="#cfcfcf"/><path d="M0 5.5 H10" stroke="#cfcfcf" stroke-dasharray="1 1"/><path d="M1 11 L5 7 L9 11 Z" fill="#cfcfcf"/></svg>
<svg class="a" style="left:1509px;top:199.5px" width="11" height="3" viewBox="0 0 11 3"><circle cx="1.5" cy="1.5" r="1.4" fill="#d0d0d0"/><circle cx="5.5" cy="1.5" r="1.4" fill="#d0d0d0"/><circle cx="9.5" cy="1.5" r="1.4" fill="#d0d0d0"/></svg>
<div class="a" style="left:1336px;top:208.5px;width:189px;height:2px;background:#4a4a4a"></div>
<svg class="a" style="left:1348px;top:221px" width="6" height="9" viewBox="0 0 6 9"><path d="M1 1 L4.5 4.5 L1 8" fill="none" stroke="#d0d0d0" stroke-width="1.5"/></svg>
<div class="t" id="t47" style="left:1362.7px;top:218.9px;font-size:11px;color:#c8c8c8;font-weight:normal;transform:scaleX(0.897);--w:148">テキストからベクター生成 (Beta)</div>
<div class="a" style="left:1336px;top:239px;width:189px;height:2px;background:#4a4a4a"></div>
<div class="t" id="t48" style="left:1344px;top:251.4px;font-size:11px;color:#bdbdbd;font-weight:normal;transform:scaleX(0.864);--w:57">アピアランス</div>
<svg class="a" style="left:1345px;top:273px" width="13" height="13" viewBox="0 0 13 13"><rect x="0.5" y="0.5" width="12" height="12" fill="#fff" stroke="#333" stroke-width="0.5"/><path d="M0.8 12.2 L12.2 0.8" stroke="#e8262a" stroke-width="1.8"/></svg>
<div class="t" id="t49" style="left:1368.5px;top:277.9px;font-size:11px;color:#dadada;font-weight:normal;transform:scaleX(0.682);--w:15">塗り</div>
<div class="a" style="left:1345px;top:296.5px;width:13px;height:13px;background:#000;border:1px solid #d0d0d0"></div>
<div class="a" style="left:1348.5px;top:300px;width:6px;height:6px;border:1.3px solid #d8d8d8"></div>
<div class="t" id="t50" style="left:1368.5px;top:301.9px;font-size:11px;color:#dadada;font-weight:normal;transform:scaleX(0.909);--w:10">線</div>
<div class="a" style="left:1413.8px;top:295px;width:54.2px;height:15.5px;background:#464646;border:1px solid #4c4c4c"></div>
<svg class="a" style="left:1418px;top:297px" width="8" height="12" viewBox="0 0 8 12"><path d="M1 4 L4 1 L7 4 M1 8 L4 11 L7 8" fill="none" stroke="#d0d0d0" stroke-width="1.2"/></svg>
<div class="a" style="left:1428px;top:296px;width:26px;height:13.5px;background:#3e3e3e"></div>
<div class="t" id="t51" style="left:1430.6px;top:298.4px;font-size:11px;color:#e0e0e0;font-weight:normal;transform:scaleX(0.999);--w:22">0.5 r</div>
<svg class="a" style="left:1457px;top:301px" width="8" height="5" viewBox="0 0 8 5"><path d="M1 1 L4 4 L7 1" fill="none" stroke="#d8d8d8" stroke-width="1.3"/></svg>
<svg class="a" style="left:1345px;top:320.5px" width="13" height="13" viewBox="0 0 13 13"><rect x="0" y="0" width="13" height="13" fill="#6a6a6a" stroke="#888" stroke-width="0.6"/><path d="M0 0 h3.25 v3.25 h-3.25 z M6.5 0 h3.25 v3.25 h-3.25 z M3.25 3.25 h3.25 v3.25 h-3.25 z M9.75 3.25 h3.25 v3.25 h-3.25 z M0 6.5 h3.25 v3.25 h-3.25 z M6.5 6.5 h3.25 v3.25 h-3.25 z M3.25 9.75 h3.25 v3.25 h-3.25 z M9.75 9.75 h3.25 v3.25 h-3.25 z" fill="#555"/></svg>
<div class="t" id="t52" style="left:1368.5px;top:323.4px;font-size:11px;color:#dadada;font-weight:normal;transform:scaleX(0.841);--w:37">不透明度</div>
<div class="a" style="left:1368.5px;top:335px;width:37px;height:1px;border-bottom:1px dotted #9a9a9a"></div>
<div class="a" style="left:1413.8px;top:318.6px;width:40.2px;height:15.8px;background:#464646;border:1px solid #4c4c4c"></div>
<div class="t" id="t53" style="left:1417px;top:321.4px;font-size:11px;color:#e0e0e0;font-weight:normal;transform:scaleX(0.888);--w:25">100%</div>
<div class="a" style="left:1454px;top:318.6px;width:14px;height:15.8px;background:#4a4a4a;border:1px solid #4c4c4c"></div>
<svg class="a" style="left:1459px;top:322.5px" width="6" height="8" viewBox="0 0 6 8"><path d="M1 1 L4 4 L1 7" fill="none" stroke="#d0d0d0" stroke-width="1.3"/></svg>
<div class="t" id="t54" style="left:1349px;top:349.9px;font-size:11px;color:#bdbdbd;font-weight:normal;transform:scaleX(1.032);--w:12"><i>fx</i>.</div>
<svg class="a" style="left:1509px;top:374px" width="11" height="3" viewBox="0 0 11 3"><circle cx="1.5" cy="1.5" r="1.4" fill="#d0d0d0"/><circle cx="5.5" cy="1.5" r="1.4" fill="#d0d0d0"/><circle cx="9.5" cy="1.5" r="1.4" fill="#d0d0d0"/></svg>
<div class="a" style="left:1336px;top:382px;width:189px;height:2px;background:#4a4a4a"></div>
<div class="t" id="t55" style="left:1344px;top:394.4px;font-size:11px;color:#bdbdbd;font-weight:normal;transform:scaleX(0.882);--w:19.4">整列</div>
<svg class="a" style="left:1346px;top:418px" width="19" height="12" viewBox="0 0 19 12"><rect x="0.5" y="0.5" width="11" height="10" fill="none" stroke="#c4c4c4" stroke-dasharray="2 1.5"/><rect x="5" y="4.5" width="2" height="2" fill="#c4c4c4"/><path d="M13 5 L15.5 7.5 L18 5" fill="none" stroke="#c4c4c4" stroke-width="1.2"/></svg>
<svg class="a" style="left:1376.6px;top:418px" width="13" height="13" viewBox="0 0 13 13"><rect x="0" y="0" width="1.5" height="13" fill="#c4c4c4"/><rect x="2.5" y="2" width="6" height="4" fill="#c4c4c4"/><rect x="2.5" y="7" width="10" height="4" fill="#c4c4c4"/></svg>
<svg class="a" style="left:1399px;top:418px" width="13" height="13" viewBox="0 0 13 13"><rect x="5.5" y="0" width="1.5" height="13" fill="#c4c4c4"/><rect x="3" y="2" width="7" height="4" fill="#c4c4c4"/><rect x="0" y="7" width="13" height="4" fill="#c4c4c4"/></svg>
<svg class="a" style="left:1425px;top:418px" width="13" height="13" viewBox="0 0 13 13"><rect x="11.5" y="0" width="1.5" height="13" fill="#c4c4c4"/><rect x="4.5" y="2" width="6" height="4" fill="#c4c4c4"/><rect x="0.5" y="7" width="10" height="4" fill="#c4c4c4"/></svg>
<svg class="a" style="left:1447.7px;top:418px" width="14" height="13" viewBox="0 0 14 13"><rect x="0" y="0" width="14" height="1.5" fill="#c4c4c4"/><rect x="1.5" y="2.5" width="4" height="10" fill="#c4c4c4"/><rect x="7" y="2.5" width="4" height="6" fill="#c4c4c4"/></svg>
<svg class="a" style="left:1471px;top:418px" width="14" height="13" viewBox="0 0 14 13"><rect x="0" y="5.5" width="14" height="1.5" fill="#c4c4c4"/><rect x="2" y="0.5" width="4" height="12" fill="#c4c4c4"/><rect x="7.5" y="2.5" width="4" height="8" fill="#c4c4c4"/></svg>
<svg class="a" style="left:1495px;top:418px" width="14" height="13" viewBox="0 0 14 13"><rect x="0" y="11.5" width="14" height="1.5" fill="#c4c4c4"/><rect x="1.5" y="0.5" width="4" height="10" fill="#c4c4c4"/><rect x="7" y="4.5" width="4" height="6" fill="#c4c4c4"/></svg>
<svg class="a" style="left:1509px;top:444px" width="11" height="3" viewBox="0 0 11 3"><circle cx="1.5" cy="1.5" r="1.4" fill="#d0d0d0"/><circle cx="5.5" cy="1.5" r="1.4" fill="#d0d0d0"/><circle cx="9.5" cy="1.5" r="1.4" fill="#d0d0d0"/></svg>
<div class="a" style="left:1336px;top:452.5px;width:189px;height:2px;background:#4a4a4a"></div>
<div class="t" id="t56" style="left:1344.3px;top:464.6px;font-size:11px;color:#bdbdbd;font-weight:normal;transform:scaleX(0.864);--w:76">パスファインダー</div>
<svg class="a" style="left:1348.5px;top:489px" width="12" height="12" viewBox="0 0 12 12"><rect x="0" y="0" width="8" height="8" fill="#c4c4c4"/><rect x="4" y="4" width="8" height="8" fill="#c4c4c4"/></svg>
<svg class="a" style="left:1373px;top:489px" width="12" height="12" viewBox="0 0 12 12"><rect x="0" y="0" width="8" height="8" fill="#c4c4c4"/><rect x="4.5" y="4.5" width="7" height="7" fill="#535353" stroke="#c4c4c4" stroke-width="1.2"/></svg>
<svg class="a" style="left:1398px;top:489px" width="12" height="12" viewBox="0 0 12 12"><rect x="0.6" y="0.6" width="7" height="7" fill="none" stroke="#c4c4c4" stroke-width="1.2"/><rect x="4.5" y="4.5" width="7" height="7" fill="none" stroke="#c4c4c4" stroke-width="1.2"/><rect x="4.5" y="4.5" width="3" height="3" fill="#c4c4c4"/></svg>
<svg class="a" style="left:1423px;top:489px" width="12" height="12" viewBox="0 0 12 12"><rect x="0" y="0" width="8" height="8" fill="#c4c4c4"/><rect x="4" y="4" width="8" height="8" fill="#c4c4c4"/><rect x="4" y="4" width="4" height="4" fill="#535353"/></svg>
<div class="a" style="left:1486.5px;top:480px;width:36.5px;height:17px;background:#575757;border-radius:2px"></div>
<div class="t" id="t57" style="left:1496px;top:482.4px;font-size:11px;color:#777;font-weight:normal;transform:scaleX(0.818);--w:18">拡張</div>
<svg class="a" style="left:1509px;top:505.5px" width="11" height="3" viewBox="0 0 11 3"><circle cx="1.5" cy="1.5" r="1.4" fill="#d0d0d0"/><circle cx="5.5" cy="1.5" r="1.4" fill="#d0d0d0"/><circle cx="9.5" cy="1.5" r="1.4" fill="#d0d0d0"/></svg>
<div class="a" style="left:1336px;top:515px;width:189px;height:2px;background:#4a4a4a"></div>
<div class="t" id="t58" style="left:1344px;top:531.0px;font-size:11px;color:#bdbdbd;font-weight:normal;transform:scaleX(0.873);--w:57.6">クイック操作</div>
<div class="a" style="left:1344px;top:551px;width:181px;height:16.5px;border:1px solid #6e6e6e;border-radius:2px"></div>
<div class="t" id="t59" style="left:1415.5px;top:553.5px;font-size:11px;color:#e6e6e6;font-weight:bold;transform:scaleX(0.864);--w:38">グループ</div>
<div class="a" style="left:1344px;top:575.8px;width:181px;height:16.5px;border:1px solid #6e6e6e;border-radius:2px"></div>
<div class="t" id="t60" style="left:1386.5px;top:578.2px;font-size:11px;color:#e6e6e6;font-weight:bold;transform:scaleX(0.873);--w:96">オブジェクトを再配色</div>
<div class="a" style="left:1344px;top:600.5px;width:181px;height:16.5px;border:1px solid #6e6e6e;border-radius:2px"></div>
<div class="t" id="t61" style="left:1381.5px;top:603.0px;font-size:11px;color:#e6e6e6;font-weight:bold;transform:scaleX(0.876);--w:106">ピクセルグリッドに整合</div>
<div class="a" style="left:1344px;top:625px;width:181px;height:16.5px;border:1px solid #6e6e6e;border-radius:2px"></div>
<div class="t" id="t62" style="left:1377.5px;top:627.5px;font-size:11px;color:#e6e6e6;font-weight:bold;transform:scaleX(0.864);--w:114">クリッピングマスクを作成</div>
<div class="a" style="left:1344px;top:650px;width:181px;height:16.5px;border:1px solid #6e6e6e;border-radius:2px"></div>
<div class="t" id="t63" style="left:1401.75px;top:652.5px;font-size:11px;color:#e6e6e6;font-weight:bold;transform:scaleX(0.924);--w:65.5">Retype (Beta)</div>
<div class="a" style="left:1336px;top:835px;width:200px;height:25px;background:#434343"></div>
<div class="t" id="t64" style="left:1344px;top:841.5px;font-size:11px;color:#a8a8a8;font-weight:normal;transform:scaleX(0.636);--w:56">パスファインダー</div>
<div class="a" style="left:1407px;top:835px;width:36.5px;height:25px;background:#535353"></div>
<svg class="a" style="left:1409px;top:842px" width="6" height="10" viewBox="0 0 6 10"><path d="M1 3.5 L3 1 L5 3.5 M1 6.5 L3 9 L5 6.5" fill="none" stroke="#bdbdbd" stroke-width="1"/></svg>
<div class="t" id="t65" style="left:1418.8px;top:841.5px;font-size:11px;color:#e6e6e6;font-weight:normal;transform:scaleX(0.895);--w:19.7">整列</div>
<div class="a" style="left:1521px;top:844.0px;width:9px;height:1px;background:#c8c8c8"></div>
<div class="a" style="left:1521px;top:846.8px;width:9px;height:1px;background:#c8c8c8"></div>
<div class="a" style="left:1521px;top:849.6px;width:9px;height:1px;background:#c8c8c8"></div>
<div class="a" style="left:1336px;top:860px;width:200px;height:6px;background:#000"></div>
<div class="a" style="left:234px;top:860px;width:1102px;height:6px;background:#000"></div>
<div class="a" style="left:181.5px;top:19px;width:250.5px;height:703px;background:#f9f9f9;border:1px solid #e4e4e4;border-radius:4px;box-shadow:0 4px 12px rgba(0,0,0,.17)"></div>
<div class="a" style="left:186.5px;top:408.4px;width:240px;height:16.5px;background:#eeeeee;border-radius:4px"></div>
<div class="t" id="t66" style="left:212.3px;top:25.4px;font-size:11px;color:#1c1c1c;font-weight:normal;-webkit-text-stroke:0.1px #1c1c1c;transform:scaleX(0.818);--w:29.5">変形(T)</div>
<svg class="a" style="left:415px;top:26.1px" width="6" height="9" viewBox="0 0 6 9"><path d="M1 1 L4.5 4.5 L1 8" fill="none" stroke="#333" stroke-width="1.2"/></svg>
<div class="t" id="t67" style="left:212.3px;top:42.3px;font-size:11px;color:#1c1c1c;font-weight:normal;-webkit-text-stroke:0.1px #1c1c1c;transform:scaleX(0.839);--w:40">重ね順(A)</div>
<svg class="a" style="left:415px;top:43.1px" width="6" height="9" viewBox="0 0 6 9"><path d="M1 1 L4.5 4.5 L1 8" fill="none" stroke="#333" stroke-width="1.2"/></svg>
<div class="t" id="t68" style="left:212.3px;top:60.0px;font-size:11px;color:#1c1c1c;font-weight:normal;-webkit-text-stroke:0.1px #1c1c1c;transform:scaleX(0.845);--w:31">整列(A)</div>
<svg class="a" style="left:415px;top:60.8px" width="6" height="9" viewBox="0 0 6 9"><path d="M1 1 L4.5 4.5 L1 8" fill="none" stroke="#333" stroke-width="1.2"/></svg>
<div class="t" id="t69" style="left:212.3px;top:77.5px;font-size:11px;color:#1c1c1c;font-weight:normal;-webkit-text-stroke:0.1px #1c1c1c;transform:scaleX(0.832);--w:31">分布(U)</div>
<svg class="a" style="left:415px;top:78.2px" width="6" height="9" viewBox="0 0 6 9"><path d="M1 1 L4.5 4.5 L1 8" fill="none" stroke="#333" stroke-width="1.2"/></svg>
<div class="a" style="left:189px;top:95.3px;width:236px;height:1px;background:#e2e2e2"></div>
<div class="t" id="t70" style="left:212.3px;top:102.2px;font-size:11px;color:#1c1c1c;font-weight:normal;-webkit-text-stroke:0.1px #1c1c1c;transform:scaleX(0.676);--w:40.5">グループ(G)</div>
<div class="t" id="t71" style="left:384.7px;top:102.2px;font-size:11px;color:#1c1c1c;font-weight:normal;transform:scaleX(0.832);--w:26.7">Ctrl+G</div>
<div class="t" id="t72" style="left:212.3px;top:119.5px;font-size:11px;color:#a4a4a4;font-weight:normal;-webkit-text-stroke:0.1px #a4a4a4;transform:scaleX(0.726);--w:59">グループ解除(U)</div>
<div class="t" id="t73" style="left:359.4px;top:119.5px;font-size:11px;color:#a4a4a4;font-weight:normal;transform:scaleX(0.859);--w:52">Shift+Ctrl+G</div>
<div class="t" id="t74" style="left:212.3px;top:136.8px;font-size:11px;color:#1c1c1c;font-weight:normal;-webkit-text-stroke:0.1px #1c1c1c;transform:scaleX(0.667);--w:31">ロック(L)</div>
<svg class="a" style="left:415px;top:137.5px" width="6" height="9" viewBox="0 0 6 9"><path d="M1 1 L4.5 4.5 L1 8" fill="none" stroke="#333" stroke-width="1.2"/></svg>
<div class="t" id="t75" style="left:212.3px;top:154.3px;font-size:11px;color:#a4a4a4;font-weight:normal;-webkit-text-stroke:0.1px #a4a4a4;transform:scaleX(0.717);--w:81.5">すべてをロック解除(K)</div>
<div class="t" id="t76" style="left:367.7px;top:154.3px;font-size:11px;color:#a4a4a4;font-weight:normal;transform:scaleX(0.893);--w:43.7">Alt+Ctrl+2</div>
<div class="t" id="t77" style="left:212.3px;top:172.1px;font-size:11px;color:#1c1c1c;font-weight:normal;-webkit-text-stroke:0.1px #1c1c1c;transform:scaleX(0.818);--w:30.5">隠す(H)</div>
<svg class="a" style="left:415px;top:172.8px" width="6" height="9" viewBox="0 0 6 9"><path d="M1 1 L4.5 4.5 L1 8" fill="none" stroke="#333" stroke-width="1.2"/></svg>
<div class="t" id="t78" style="left:212.3px;top:189.4px;font-size:11px;color:#a4a4a4;font-weight:normal;-webkit-text-stroke:0.1px #a4a4a4;transform:scaleX(0.742);--w:49">すべてを表示</div>
<div class="t" id="t79" style="left:367.7px;top:189.4px;font-size:11px;color:#a4a4a4;font-weight:normal;transform:scaleX(0.893);--w:43.7">Alt+Ctrl+3</div>
<div class="a" style="left:189px;top:207.6px;width:236px;height:1px;background:#e2e2e2"></div>
<div class="t" id="t80" style="left:212.3px;top:214.2px;font-size:11px;color:#1c1c1c;font-weight:normal;-webkit-text-stroke:0.1px #1c1c1c;transform:scaleX(0.781);--w:61.6">分割・拡張(X)...</div>
<div class="t" id="t81" style="left:212.3px;top:231.8px;font-size:11px;color:#a4a4a4;font-weight:normal;-webkit-text-stroke:0.1px #a4a4a4;transform:scaleX(0.695);--w:79">アピアランスを分割(E)</div>
<div class="t" id="t82" style="left:212.3px;top:249.2px;font-size:11px;color:#a4a4a4;font-weight:normal;-webkit-text-stroke:0.1px #a4a4a4;transform:scaleX(0.765);--w:70.6">画像の切り抜き(C)</div>
<div class="t" id="t83" style="left:212.3px;top:266.8px;font-size:11px;color:#1c1c1c;font-weight:normal;-webkit-text-stroke:0.1px #1c1c1c;transform:scaleX(0.673);--w:60">ラスタライズ(Z)...</div>
<div class="t" id="t84" style="left:212.3px;top:284.2px;font-size:11px;color:#1c1c1c;font-weight:normal;-webkit-text-stroke:0.1px #1c1c1c;transform:scaleX(0.672);--w:120">グラデーションメッシュを作成(D)...</div>
<div class="t" id="t85" style="left:212.3px;top:301.8px;font-size:11px;color:#a4a4a4;font-weight:normal;-webkit-text-stroke:0.1px #a4a4a4;transform:scaleX(0.679);--w:112">モザイクオブジェクトを作成(J)...</div>
<div class="t" id="t86" style="left:212.3px;top:319.2px;font-size:11px;color:#1c1c1c;font-weight:normal;-webkit-text-stroke:0.1px #1c1c1c;transform:scaleX(0.683);--w:78">トリムマークを作成(C)</div>
<div class="t" id="t87" style="left:212.3px;top:336.8px;font-size:11px;color:#1c1c1c;font-weight:normal;-webkit-text-stroke:0.1px #1c1c1c;transform:scaleX(0.796);--w:106">透明部分を分割・統合(F)...</div>
<div class="a" style="left:189px;top:354.5px;width:236px;height:1px;background:#e2e2e2"></div>
<div class="t" id="t88" style="left:212.3px;top:361.2px;font-size:11px;color:#1c1c1c;font-weight:normal;-webkit-text-stroke:0.1px #1c1c1c;transform:scaleX(0.710);--w:105.5">ピクセルグリッドに最適化(M)</div>
<div class="a" style="left:189px;top:379px;width:236px;height:1px;background:#e2e2e2"></div>
<div class="t" id="t89" style="left:212.3px;top:386.2px;font-size:11px;color:#1c1c1c;font-weight:normal;-webkit-text-stroke:0.1px #1c1c1c;transform:scaleX(0.648);--w:38">スライス(S)</div>
<svg class="a" style="left:415px;top:387.0px" width="6" height="9" viewBox="0 0 6 9"><path d="M1 1 L4.5 4.5 L1 8" fill="none" stroke="#333" stroke-width="1.2"/></svg>
<div class="a" style="left:189px;top:404px;width:236px;height:1px;background:#e2e2e2"></div>
<div class="t" id="t90" style="left:212.3px;top:411.1px;font-size:11px;color:#1c1c1c;font-weight:normal;-webkit-text-stroke:0.1px #1c1c1c;transform:scaleX(0.723);--w:26.5">パス(P)</div>
<svg class="a" style="left:415px;top:411.9px" width="6" height="9" viewBox="0 0 6 9"><path d="M1 1 L4.5 4.5 L1 8" fill="none" stroke="#333" stroke-width="1.2"/></svg>
<div class="t" id="t91" style="left:212.3px;top:428.6px;font-size:11px;color:#1c1c1c;font-weight:normal;-webkit-text-stroke:0.1px #1c1c1c;transform:scaleX(0.665);--w:39">シェイプ(P)</div>
<svg class="a" style="left:415px;top:429.4px" width="6" height="9" viewBox="0 0 6 9"><path d="M1 1 L4.5 4.5 L1 8" fill="none" stroke="#333" stroke-width="1.2"/></svg>
<div class="t" id="t92" style="left:212.3px;top:446.2px;font-size:11px;color:#1c1c1c;font-weight:normal;-webkit-text-stroke:0.1px #1c1c1c;transform:scaleX(0.665);--w:39">パターン(E)</div>
<svg class="a" style="left:415px;top:447.0px" width="6" height="9" viewBox="0 0 6 9"><path d="M1 1 L4.5 4.5 L1 8" fill="none" stroke="#333" stroke-width="1.2"/></svg>
<div class="t" id="t93" style="left:212.3px;top:463.8px;font-size:11px;color:#1c1c1c;font-weight:normal;-webkit-text-stroke:0.1px #1c1c1c;transform:scaleX(0.591);--w:26">リピート</div>
<svg class="a" style="left:415px;top:464.5px" width="6" height="9" viewBox="0 0 6 9"><path d="M1 1 L4.5 4.5 L1 8" fill="none" stroke="#333" stroke-width="1.2"/></svg>
<div class="t" id="t94" style="left:212.3px;top:481.4px;font-size:11px;color:#1c1c1c;font-weight:normal;-webkit-text-stroke:0.1px #1c1c1c;transform:scaleX(0.675);--w:52">クロスと重なり</div>
<svg class="a" style="left:415px;top:482.1px" width="6" height="9" viewBox="0 0 6 9"><path d="M1 1 L4.5 4.5 L1 8" fill="none" stroke="#333" stroke-width="1.2"/></svg>
<div class="t" id="t95" style="left:212.3px;top:498.4px;font-size:11px;color:#1c1c1c;font-weight:normal;-webkit-text-stroke:0.1px #1c1c1c;transform:scaleX(0.665);--w:39">ブレンド(B)</div>
<svg class="a" style="left:415px;top:499.2px" width="6" height="9" viewBox="0 0 6 9"><path d="M1 1 L4.5 4.5 L1 8" fill="none" stroke="#333" stroke-width="1.2"/></svg>
<div class="t" id="t96" style="left:212.3px;top:516.4px;font-size:11px;color:#1c1c1c;font-weight:normal;-webkit-text-stroke:0.1px #1c1c1c;transform:scaleX(0.669);--w:54">エンベロープ(V)</div>
<svg class="a" style="left:415px;top:517.1px" width="6" height="9" viewBox="0 0 6 9"><path d="M1 1 L4.5 4.5 L1 8" fill="none" stroke="#333" stroke-width="1.2"/></svg>
<div class="t" id="t97" style="left:212.3px;top:534.0px;font-size:11px;color:#1c1c1c;font-weight:normal;-webkit-text-stroke:0.1px #1c1c1c;transform:scaleX(0.818);--w:30">遠近(P)</div>
<svg class="a" style="left:415px;top:534.7px" width="6" height="9" viewBox="0 0 6 9"><path d="M1 1 L4.5 4.5 L1 8" fill="none" stroke="#333" stroke-width="1.2"/></svg>
<div class="t" id="t98" style="left:212.3px;top:551.5px;font-size:11px;color:#1c1c1c;font-weight:normal;-webkit-text-stroke:0.1px #1c1c1c;transform:scaleX(0.661);--w:61">ライブペイント(N)</div>
<svg class="a" style="left:415px;top:552.2px" width="6" height="9" viewBox="0 0 6 9"><path d="M1 1 L4.5 4.5 L1 8" fill="none" stroke="#333" stroke-width="1.2"/></svg>
<div class="t" id="t99" style="left:212.3px;top:569.0px;font-size:11px;color:#1c1c1c;font-weight:normal;-webkit-text-stroke:0.1px #1c1c1c;transform:scaleX(0.687);--w:68">モックアップ (Beta)</div>
<svg class="a" style="left:415px;top:569.8px" width="6" height="9" viewBox="0 0 6 9"><path d="M1 1 L4.5 4.5 L1 8" fill="none" stroke="#333" stroke-width="1.2"/></svg>
<div class="t" id="t100" style="left:212.3px;top:586.5px;font-size:11px;color:#1c1c1c;font-weight:normal;-webkit-text-stroke:0.1px #1c1c1c;transform:scaleX(0.691);--w:45.6">画像トレース</div>
<svg class="a" style="left:415px;top:587.3px" width="6" height="9" viewBox="0 0 6 9"><path d="M1 1 L4.5 4.5 L1 8" fill="none" stroke="#333" stroke-width="1.2"/></svg>
<div class="t" id="t101" style="left:212.3px;top:604.0px;font-size:11px;color:#1c1c1c;font-weight:normal;-webkit-text-stroke:0.1px #1c1c1c;transform:scaleX(0.720);--w:84">テキストの回り込み(W)</div>
<svg class="a" style="left:415px;top:604.8px" width="6" height="9" viewBox="0 0 6 9"><path d="M1 1 L4.5 4.5 L1 8" fill="none" stroke="#333" stroke-width="1.2"/></svg>
<div class="a" style="left:189px;top:621.3px;width:236px;height:1px;background:#e2e2e2"></div>
<div class="t" id="t102" style="left:212.3px;top:628.5px;font-size:11px;color:#1c1c1c;font-weight:normal;-webkit-text-stroke:0.1px #1c1c1c;transform:scaleX(0.667);--w:77">クリッピングマスク(M)</div>
<svg class="a" style="left:415px;top:629.3px" width="6" height="9" viewBox="0 0 6 9"><path d="M1 1 L4.5 4.5 L1 8" fill="none" stroke="#333" stroke-width="1.2"/></svg>
<div class="t" id="t103" style="left:212.3px;top:646.4px;font-size:11px;color:#1c1c1c;font-weight:normal;-webkit-text-stroke:0.1px #1c1c1c;transform:scaleX(0.785);--w:47">複合パス(O)</div>
<svg class="a" style="left:415px;top:647.1px" width="6" height="9" viewBox="0 0 6 9"><path d="M1 1 L4.5 4.5 L1 8" fill="none" stroke="#333" stroke-width="1.2"/></svg>
<div class="t" id="t104" style="left:212.3px;top:663.8px;font-size:11px;color:#1c1c1c;font-weight:normal;-webkit-text-stroke:0.1px #1c1c1c;transform:scaleX(0.657);--w:53">アートボード(A)</div>
<svg class="a" style="left:415px;top:664.5px" width="6" height="9" viewBox="0 0 6 9"><path d="M1 1 L4.5 4.5 L1 8" fill="none" stroke="#333" stroke-width="1.2"/></svg>
<div class="t" id="t105" style="left:212.3px;top:681.5px;font-size:11px;color:#1c1c1c;font-weight:normal;-webkit-text-stroke:0.1px #1c1c1c;transform:scaleX(0.642);--w:31">グラフ(R)</div>
<svg class="a" style="left:415px;top:682.2px" width="6" height="9" viewBox="0 0 6 9"><path d="M1 1 L4.5 4.5 L1 8" fill="none" stroke="#333" stroke-width="1.2"/></svg>
<div class="a" style="left:189px;top:699.3px;width:236px;height:1px;background:#e2e2e2"></div>
<div class="t" id="t106" style="left:212.3px;top:706.0px;font-size:11px;color:#1c1c1c;font-weight:normal;-webkit-text-stroke:0.1px #1c1c1c;transform:scaleX(0.773);--w:68">書き出し用に追加</div>
<svg class="a" style="left:415px;top:706.8px" width="6" height="9" viewBox="0 0 6 9"><path d="M1 1 L4.5 4.5 L1 8" fill="none" stroke="#333" stroke-width="1.2"/></svg>
<div class="a" style="left:428.5px;top:405.4px;width:226px;height:243.3px;background:#f9f9f9;border:1px solid #e4e4e4;border-radius:4px;box-shadow:0 2px 7px rgba(0,0,0,.13)"></div>
<div class="a" style="left:432.5px;top:408.4px;width:217px;height:16.2px;background:#eeeeee;border-radius:4px"></div>
<div class="t" id="t107" style="left:458px;top:411.2px;font-size:11px;color:#1c1c1c;font-weight:normal;-webkit-text-stroke:0.1px #1c1c1c;transform:scaleX(0.804);--w:28">連結(J)</div>
<div class="t" id="t108" style="left:609.8px;top:411.2px;font-size:11px;color:#1c1c1c;font-weight:normal;transform:scaleX(0.847);--w:24.6">Ctrl+J</div>
<div class="t" id="t109" style="left:458px;top:428.8px;font-size:11px;color:#1c1c1c;font-weight:normal;-webkit-text-stroke:0.1px #1c1c1c;transform:scaleX(0.829);--w:38">平均(V)...</div>
<div class="t" id="t110" style="left:591.4px;top:428.8px;font-size:11px;color:#1c1c1c;font-weight:normal;transform:scaleX(0.890);--w:43">Alt+Ctrl+J</div>
<div class="a" style="left:435.5px;top:446px;width:211.79999999999995px;height:1px;background:#e2e2e2"></div>
<div class="t" id="t111" style="left:458px;top:453.4px;font-size:11px;color:#1c1c1c;font-weight:normal;-webkit-text-stroke:0.1px #1c1c1c;transform:scaleX(0.674);--w:77">パスのアウトライン(U)</div>
<div class="t" id="t112" style="left:458px;top:470.8px;font-size:11px;color:#1c1c1c;font-weight:normal;-webkit-text-stroke:0.1px #1c1c1c;transform:scaleX(0.690);--w:78">パスのオフセット(O)...</div>
<div class="t" id="t113" style="left:458px;top:488.8px;font-size:11px;color:#1c1c1c;font-weight:normal;-webkit-text-stroke:0.1px #1c1c1c;transform:scaleX(0.785);--w:72">パスの方向反転(E)</div>
<div class="a" style="left:435.5px;top:506px;width:211.79999999999995px;height:1px;background:#e2e2e2"></div>
<div class="t" id="t114" style="left:458px;top:513.5px;font-size:11px;color:#1c1c1c;font-weight:normal;-webkit-text-stroke:0.1px #1c1c1c;transform:scaleX(0.862);--w:50.6">単純化(M)...</div>
<div class="t" id="t115" style="left:458px;top:531.5px;font-size:11px;color:#1c1c1c;font-weight:normal;-webkit-text-stroke:0.1px #1c1c1c;transform:scaleX(0.658);--w:35">スムーズ...</div>
<div class="t" id="t116" style="left:458px;top:548.5px;font-size:11px;color:#1c1c1c;font-weight:normal;-webkit-text-stroke:0.1px #1c1c1c;transform:scaleX(0.708);--w:96">アンカーポイントの追加(A)</div>
<div class="t" id="t117" style="left:458px;top:566.0px;font-size:11px;color:#1c1c1c;font-weight:normal;-webkit-text-stroke:0.1px #1c1c1c;transform:scaleX(0.693);--w:94.4">アンカーポイントを削除(R)</div>
<div class="t" id="t118" style="left:458px;top:583.4px;font-size:11px;color:#1c1c1c;font-weight:normal;-webkit-text-stroke:0.1px #1c1c1c;transform:scaleX(0.724);--w:106.6">背面のオブジェクトを分割(D)</div>
<div class="a" style="left:435.5px;top:600.7px;width:211.79999999999995px;height:1px;background:#e2e2e2"></div>
<div class="t" id="t119" style="left:458px;top:608.6px;font-size:11px;color:#1c1c1c;font-weight:normal;-webkit-text-stroke:0.1px #1c1c1c;transform:scaleX(0.700);--w:70.6">グリッドに分割(S)...</div>
<div class="a" style="left:435.5px;top:624.7px;width:211.79999999999995px;height:1px;background:#e2e2e2"></div>
<div class="t" id="t120" style="left:458px;top:633.5px;font-size:11px;color:#1c1c1c;font-weight:normal;-webkit-text-stroke:0.1px #1c1c1c;transform:scaleX(0.772);--w:61.3">パスの削除(C)...</div>
<script>(function(){try{var e=document.querySelectorAll(".t");for(var i=0;i<e.length;i++){var w=parseFloat(getComputedStyle(e[i]).getPropertyValue("--w"));e[i].style.transform="none";var n=e[i].getBoundingClientRect().width;if(w>0&&n>0){e[i].style.transform="scaleX("+(w/n)+")";}}}catch(x){}})();</script>
</body></html>
